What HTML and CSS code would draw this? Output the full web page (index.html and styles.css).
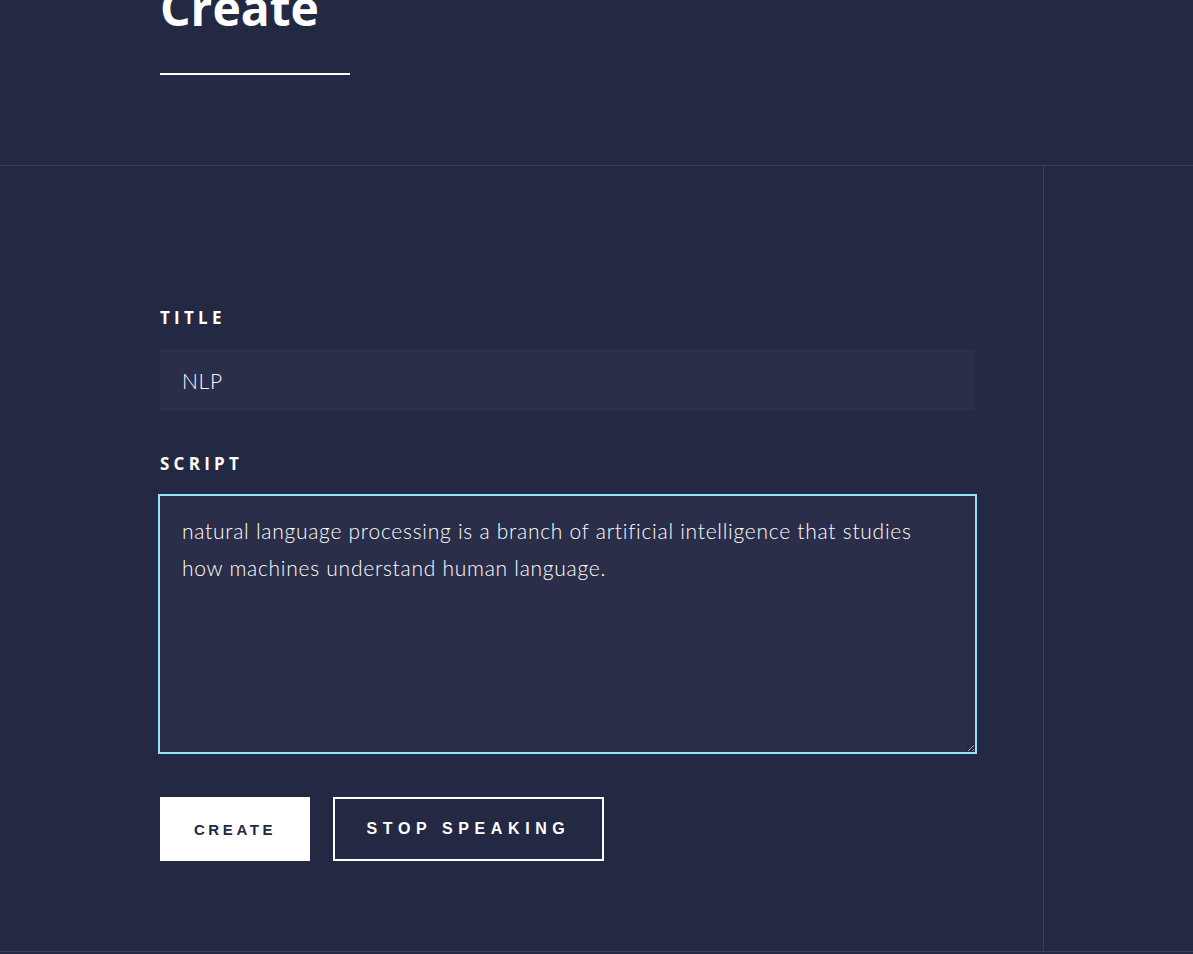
FILE: index.html
```html
<!DOCTYPE html>
<html>
<head>
<meta charset="utf-8">
<link rel="stylesheet" href="styles.css">
</head>
<body>
<header class="page-head">
  <h1 class="major">Create</h1>
</header>
<div class="layout">
  <main class="main">
    <form class="form">
      <label class="label" for="title">Title</label>
      <input class="field" id="title" type="text" value="NLP">
      <label class="label" for="script">Script</label>
      <textarea class="field area focus" id="script">natural language processing is a branch of artificial intelligence that studies how machines understand human language.</textarea>
      <div class="actions">
        <button type="button" class="btn primary">Create</button>
        <button type="button" class="btn outline">Stop speaking</button>
      </div>
    </form>
  </main>
  <aside class="side"></aside>
</div>
</body>
</html>
```
FILE: styles.css
```css
html, body {
  margin: 0;
  padding: 0;
  background: #242943;
  color: #ffffff;
  font-family: "Lato", "Liberation Sans", sans-serif;
  font-weight: 300;
}
.page-head {
  height: 165px;
  border-bottom: 1px solid rgba(255,255,255,0.1);
  padding: 0 160px;
  overflow: hidden;
}
.major {
  margin: -27px 0 0 0;
  font-family: "Open Sans", sans-serif;
  font-weight: 700;
  font-size: 48px;
  line-height: 70px;
  letter-spacing: 0;
}
.major::after {
  content: "";
  display: block;
  width: 190px;
  height: 2px;
  background: #ffffff;
  margin-top: 30px;
}
.layout {
  display: grid;
  grid-template-columns: 1043px 1fr;
  height: 785px;
  border-bottom: 1px solid rgba(255,255,255,0.1);
}
.side {
  border-left: 1px solid rgba(255,255,255,0.1);
}
.main {
  padding: 140px 68px 0 160px;
}
.form {
  display: flex;
  flex-direction: column;
}
.label {
  font-family: "Open Sans", sans-serif;
  font-weight: 700;
  font-size: 17px;
  letter-spacing: 0.25em;
  text-transform: uppercase;
  line-height: 24px;
  margin-bottom: 19px;
}
.field {
  box-sizing: border-box;
  width: 815px;
  height: 62px;
  background: #2a2e49;
  border: none;
  outline: none;
  color: #ffffff;
  font-family: "Lato", sans-serif;
  font-weight: 300;
  font-size: 21px;
  letter-spacing: 0.035em;
  padding: 0 22px;
  margin-bottom: 41px;
}
.area {
  height: 256px;
  padding: 16px 40px 16px 22px;
  line-height: 37px;
  resize: vertical;
  margin-top: 1px;
  margin-bottom: 45px;
}
.focus {
  box-shadow: 0 0 0 2px #8fe3f4;
}
.actions {
  display: flex;
  gap: 23px;
}
.btn {
  height: 64px;
  font-family: "Liberation Sans", Arial, sans-serif;
  font-weight: 700;
  text-transform: uppercase;
  padding: 0;
  cursor: pointer;
}
.primary {
  width: 150px;
  background: #ffffff;
  color: #242943;
  border: none;
  font-size: 15px;
  letter-spacing: 0.24em;
}
.outline {
  width: 271px;
  background: transparent;
  color: #ffffff;
  border: 2px solid #ffffff;
  font-size: 16px;
  letter-spacing: 0.35em;
}
```
